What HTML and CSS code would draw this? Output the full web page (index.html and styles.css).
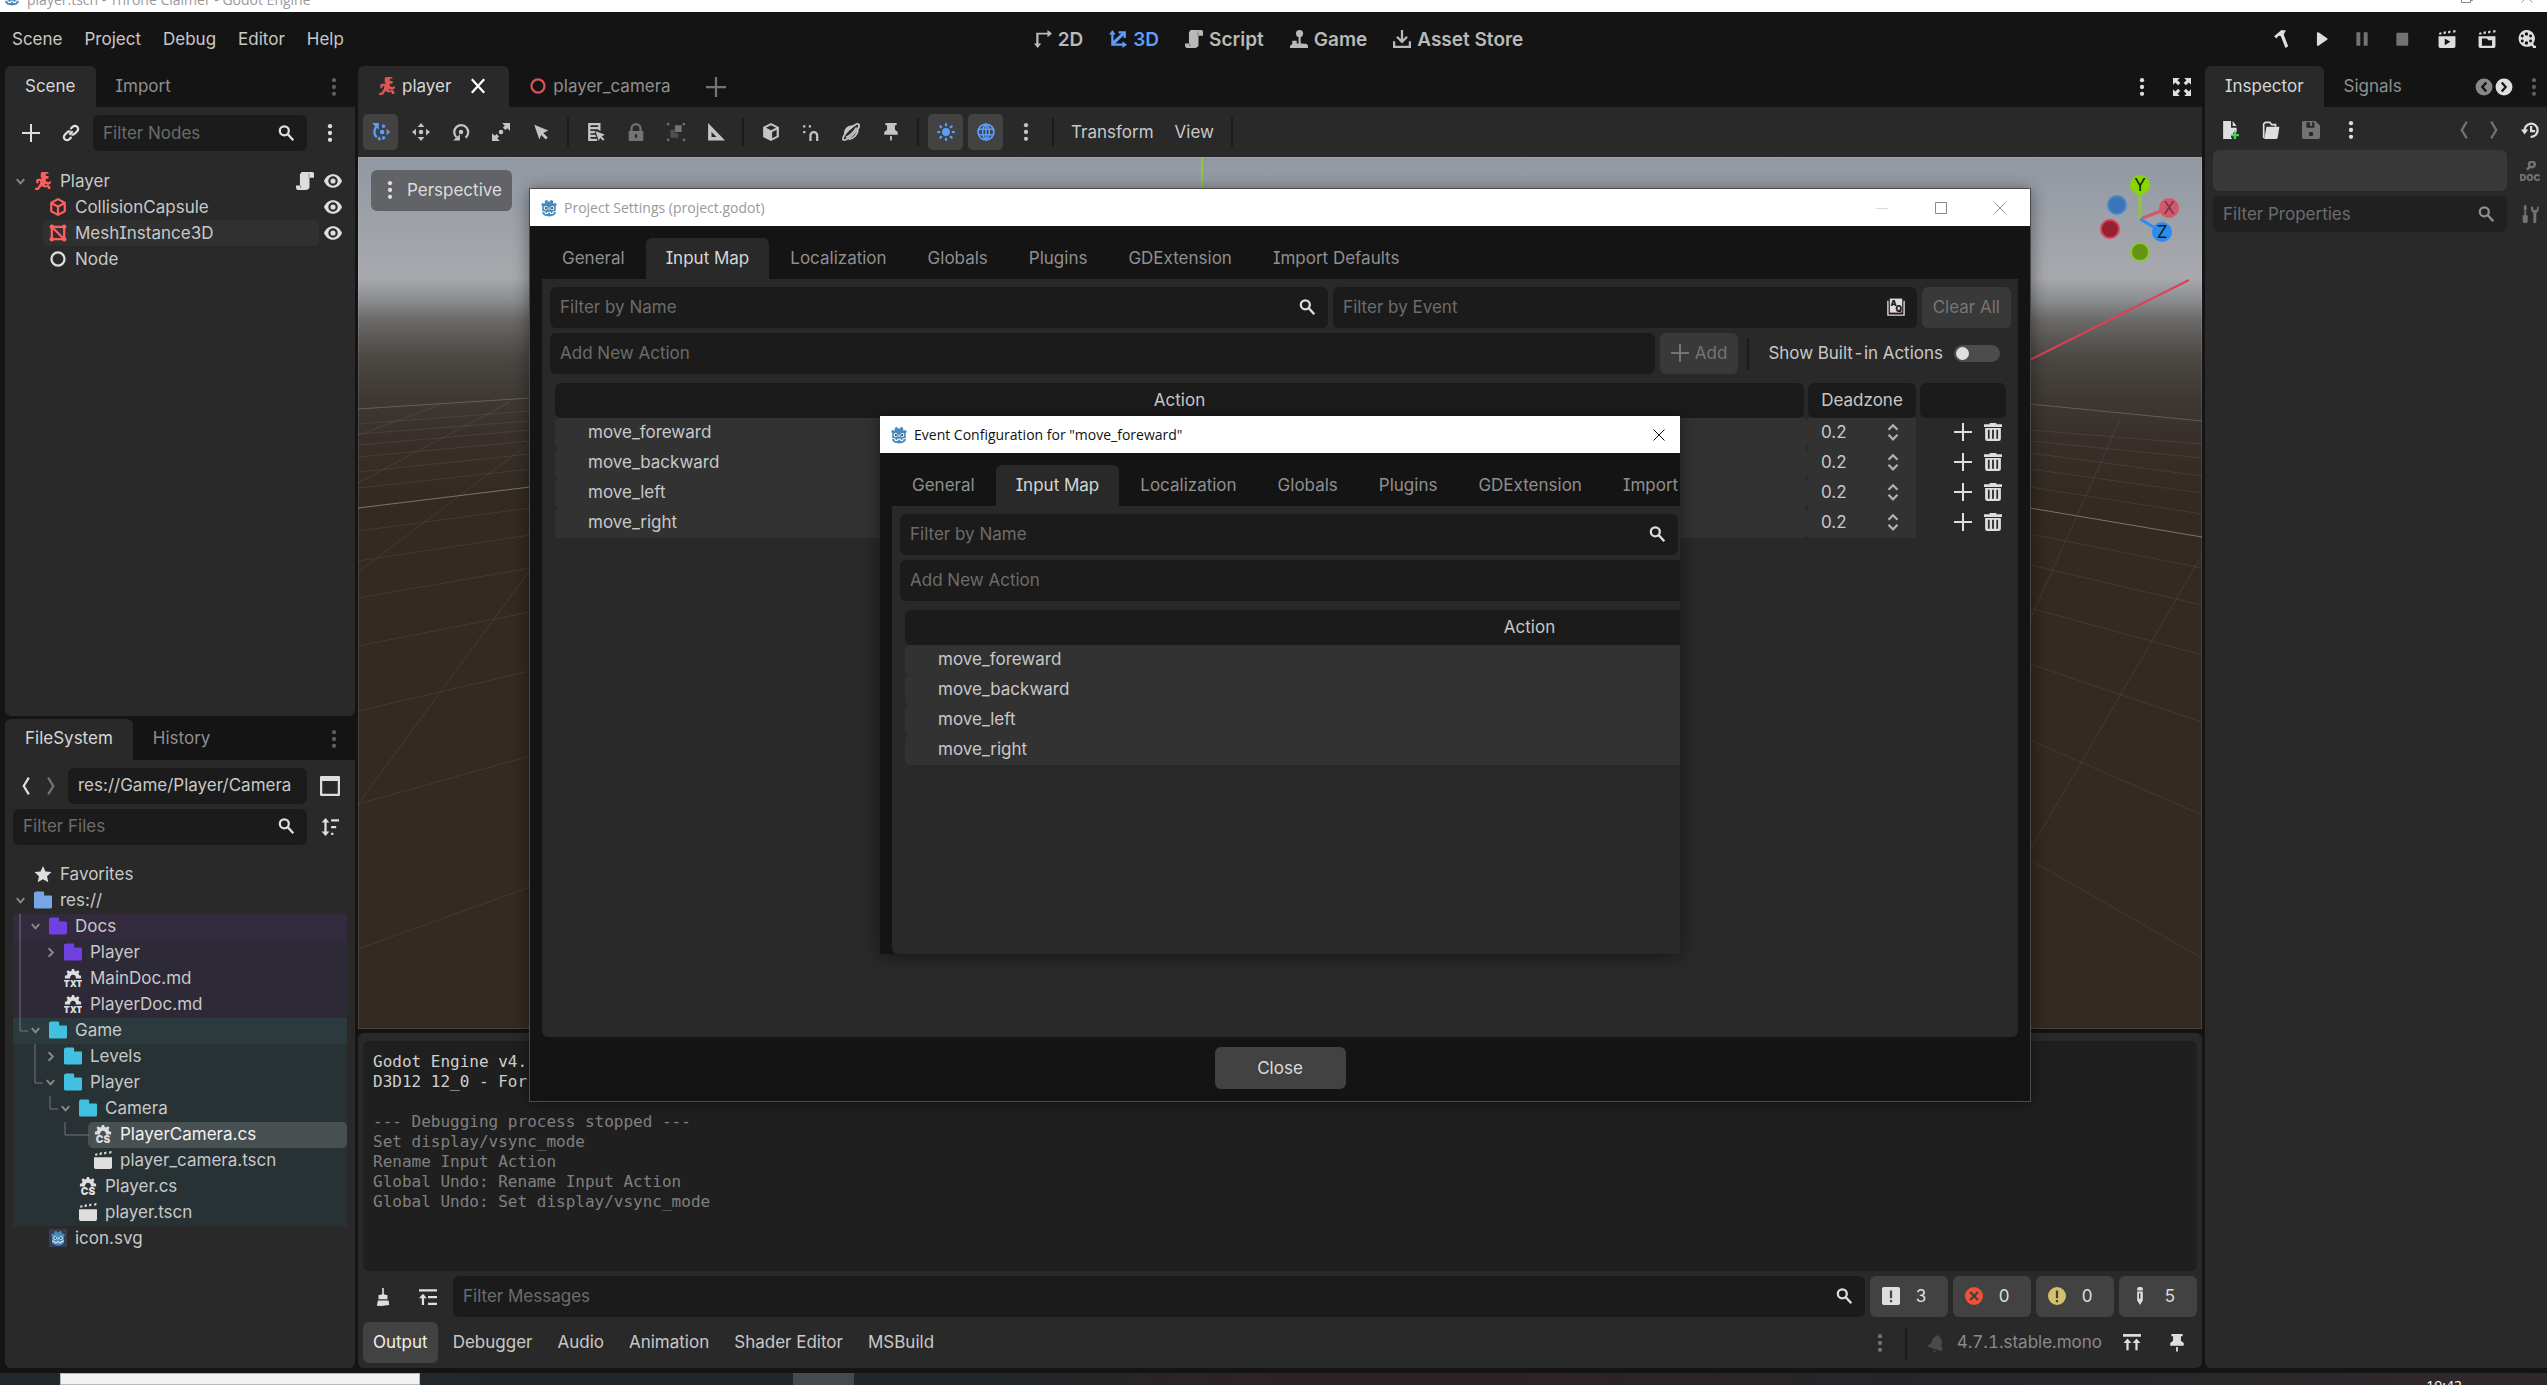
FILE: index.html
```html
<!DOCTYPE html>
<html lang="en">
<head>
    <meta charset="UTF-8">
    <meta name="viewport" content="width=device-width, initial-scale=1.0">
    <title>player.tscn - Throne Claimer - Godot Engine</title>
    <link rel="stylesheet" href="styles.css">
</head>
<body>
    <!-- icon sprite -->
    <svg class="sprite" aria-hidden="true">
        <symbol id="godot" viewBox="0 0 16 16"><path fill="#478cbf" d="M1 5.200l1.200-1.700 1.600.6.6-.4-.2-2L6.200.7l.9 1.500h1.800L9.800.7l2 1-.2 2 .6.4 1.600-.6L15 5.200l-1 1V12c0 2.200-3 3.500-6 3.500S2 14.200 2 12V6.200z"/><circle cx="5" cy="8" r="1.700" fill="#fff"/><circle cx="11" cy="8" r="1.700" fill="#fff"/><circle cx="5.200" cy="8.100" r="1" fill="#414042"/><circle cx="10.800" cy="8.100" r="1" fill="#414042"/><path stroke="#fff" stroke-width=".9" fill="none" d="M8 7.500v2M2 11l2.500.5.3 1.300h1.800l.3-1h2.200l.3 1h1.800l.3-1.300L14 11"/></symbol>
        <symbol id="add" viewBox="0 0 16 16"><path d="M7.100 0h1.800v7.100H16v1.800H8.900V16H7.100V8.900H0V7.100h7.100z"/></symbol>
        <symbol id="link" viewBox="0 0 16 16"><path class="line" d="M6.500 9.500l3-3M7.500 4.500l2-2a2.800 2.800 0 0 1 4 4l-2 2a2.800 2.800 0 0 1-3 .7M8.500 11.500l-2 2a2.800 2.800 0 0 1-4-4l2-2a2.800 2.800 0 0 1 3-.7"/></symbol>
        <symbol id="search" viewBox="0 0 16 16"><path class="line" d="M6.500 2a4 4 0 1 1 0 8 4 4 0 0 1 0-8zM9.500 9l5 5.500"/></symbol>
        <symbol id="dots" viewBox="0 0 16 16"><circle cx="8" cy="1.900" r="1.900"/><circle cx="8" cy="8" r="1.900"/><circle cx="8" cy="14.100" r="1.900"/></symbol>
        <symbol id="runner" viewBox="0 0 16 16"><path d="M7 0h4.500a1.500 1.500 0 0 1 1.500 1.500H10.500v2H13V5a1 1 0 0 1-1 1h-1.500v2l2 1L15 8v2l-2.500 1.500L10 10.500l-.7 1.200H13a1.500 1.500 0 0 1 1.500 1.500V15h-2.200v-1.500H8.500L6.800 12.500 4 16H1v-2h2l2.500-4V8H4v2H2V7.500A1.500 1.500 0 0 1 3.500 6H7V5H6V1z"/></symbol>
        <symbol id="script" viewBox="0 0 16 16"><path d="M5 0h9.500A1.500 1.500 0 0 1 16 1.500V5h-4v7.500a3 3 0 0 1-3 3.500H2.500A2.500 2.500 0 0 1 0 13.500V12h3.500V2z"/><path fill="#222" fill-opacity=".35" d="M11 1h1v4h-1zM3.500 12h1.200v2.500H3.500z"/></symbol>
        <symbol id="eye" viewBox="0 0 16 16"><path fill-rule="evenodd" d="M8 2C4.500 2 1.500 4.300 0 8c1.500 3.700 4.500 6 8 6s6.500-2.300 8-6c-1.500-3.700-4.500-6-8-6zm0 1.800a4.200 4.200 0 1 1 0 8.400 4.200 4.200 0 0 1 0-8.400z"/><circle cx="8" cy="8" r="2.300"/></symbol>
        <symbol id="shape" viewBox="0 0 16 16"><path class="line" stroke-linejoin="round" d="M8 1l6 3.200v7.600L8 15l-6-3.200V4.200zM2.300 4.500L8 7.800l5.700-3.300M8 7.800V15"/></symbol>
        <symbol id="mesh" viewBox="0 0 16 16"><path class="line" d="M2.500 2.500h11v11h-11zM2.500 2.500l11 11"/><circle cx="2.500" cy="2.500" r="2"/><circle cx="13.500" cy="2.500" r="2"/><circle cx="2.500" cy="13.500" r="2"/><circle cx="13.500" cy="13.500" r="2"/></symbol>
        <symbol id="node" viewBox="0 0 16 16"><circle class="line" cx="8" cy="8" r="5.800"/></symbol>
        <symbol id="close" viewBox="0 0 16 16"><path class="line" d="M2.500 2l11 12M13.500 2l-11 12"/></symbol>
        <symbol id="combo" viewBox="0 0 16 16"><circle cx="9" cy="8" r="2"/><path d="M0 0h6v6L4.300 4.300C2.600 6.800 2.900 10 5 12l-1.400 1.400C.7 10.600.4 6 2.800 2.800zM9 1l3 1-1 2.500L9 4zM9 15l3-1-1-2.500L9 12zM13 5l3 3-3 3zM4.800 13.500L7 12l1 3-2 .5z"/></symbol>
        <symbol id="move" viewBox="0 0 16 16"><circle cx="8" cy="8" r="2"/><path d="M8 0l3 3.500H5zM8 16l3-3.500H5zM0 8l3.500-3v6zM16 8l-3.500-3v6z"/></symbol>
        <symbol id="rotate" viewBox="0 0 16 16"><circle cx="8" cy="8" r="2"/><path class="line" d="M12 13A6.200 6.200 0 1 0 4 12.700"/><path d="M1 15.500h6V10z"/></symbol>
        <symbol id="scale" viewBox="0 0 16 16"><circle cx="8" cy="8" r="2"/><path d="M9 0h7v7l-2.400-2.400-1.700 1.700-2.200-2.200 1.700-1.700zM7 16H0V9l2.400 2.400 1.700-1.700 2.200 2.200-1.700 1.700z"/></symbol>
        <symbol id="cursor" viewBox="0 0 16 16"><path d="M2 1.500l12.500 5.200L10 8.800l4 4-1.800 1.800-4-4-1.700 4z"/></symbol>
        <symbol id="list" viewBox="0 0 16 16"><path fill-rule="evenodd" d="M1 0h11v7l-2-1V5.500H3V7h4v2H3v1.500h4.500l.7 2H3V14h6v2H1zm2 2v1.500h7V2z"/><path d="M7.500 7l8.500 3.500-3 1.300 2.500 2.700-1.200 1.200-2.600-2.600-1.200 2.900z"/></symbol>
        <symbol id="lock" viewBox="0 0 16 16"><path fill-rule="evenodd" d="M8 0a5 5 0 0 0-5 5v2H1.500v9h13V7H13V5a5 5 0 0 0-5-5zm0 2a3 3 0 0 1 3 3v2H5V5a3 3 0 0 1 3-3zM7 10h2v3H7z"/></symbol>
        <symbol id="group" viewBox="0 0 16 16"><path d="M0 0h2v2H0zM14 0h2v2h-2zM0 14h2v2H0zM14 14h2v2h-2zM7 2h6v6H7z"/><path opacity=".5" d="M3 6h4v3h3v4H3z"/></symbol>
        <symbol id="ruler" viewBox="0 0 16 16"><path fill-rule="evenodd" d="M1 0l15 15.500H1zm3 8v4.500h4.500z"/></symbol>
        <symbol id="box" viewBox="0 0 16 16"><path fill-rule="evenodd" d="M8 0l7 3.500v9L8 16l-7-3.500v-9zm0 2L3.500 4.200 8 6.500l4.500-2.300zM9 8v5.500l4-2V6z"/></symbol>
        <symbol id="snap" viewBox="0 0 16 16"><path class="line" d="M7.500 16v-5a3 3 0 0 1 6 0v5"/><path d="M1 2h2v2H1zM1 7h2v2H1zM6 2h2v2H6z"/></symbol>
        <symbol id="planet" viewBox="0 0 16 16"><path fill="none" stroke="currentColor" stroke-width="1.600" d="M14.800 1.200c1.200 1.200-.8 5-4.300 8.500s-8 6.300-9.300 5.200 1-5 4.500-8.600 7.900-6.300 9.100-5.100z"/><path d="M2 10.500C1 6.500 4 2.200 8.500 2.200L13 1z"/><path fill="none" stroke="currentColor" stroke-width="1.500" d="M6 14.500c4-.5 7.500-3.800 8.300-8M3.500 13c4-2 7-5 9.500-9"/></symbol>
        <symbol id="pin" viewBox="0 0 16 16"><path d="M3 0h10v2h-1.500v4L14 8v2.500H2V8l2.500-2V2H3zM7.200 11.500h1.600V15L8 16l-.8-1z"/></symbol>
        <symbol id="sun" viewBox="0 0 16 16"><circle cx="8" cy="8" r="3.500"/><path class="line" stroke-linecap="round" d="M8 1v1M8 14v1M1 8h1M14 8h1M3 3l.7.7M12.300 12.300l.7.7M3 13l.7-.7M12.300 3.700L13 3"/></symbol>
        <symbol id="globe" viewBox="0 0 16 16"><circle cx="8" cy="8" r="7" fill="none" stroke="currentColor" stroke-width="1.600"/><path fill="none" stroke="currentColor" stroke-width="1.400" d="M8 1v14M1.500 5.500h13M1.500 10.500h13M8 1C4 4 4 12 8 15M8 1c4 3 4 11 0 14"/></symbol>
        <symbol id="expand" viewBox="0 0 16 16"><path d="M0 0h6L4 2l2.500 2.500-2 2L2 4 0 6zM16 0h-6l2 2-2.500 2.500 2 2L14 4l2 2zM0 16h6l-2-2 2.500-2.500-2-2L2 12l-2-2zM16 16h-6l2-2-2.500-2.500 2-2L14 12l2-2z"/></symbol>
        <symbol id="v2d" viewBox="0 0 16 16"><path d="M12 0l4 3-4 3.500V4H4v8h2.500L3.200 16 0 12h2V2.500h10z"/></symbol>
        <symbol id="v3d" viewBox="0 0 16 16"><path d="M3 0l3 4H4v5.500L11 3H8.500V1H15v6h-2V4.800L5.500 12H12v-2l4 3-4 3v-2H2V4H0z"/></symbol>
        <symbol id="joystick" viewBox="0 0 16 16"><circle cx="8.500" cy="3.200" r="3.200"/><path d="M7.600 6h1.900v6H7.600zM2 9.500h4V12h5l4 .5 1 1.500v2H0v-2l2-1.500z"/></symbol>
        <symbol id="asset" viewBox="0 0 16 16"><path class="line" d="M8 0v10M3.500 6L8 10.500 12.500 6M1 10v5h14v-5"/></symbol>
        <symbol id="hammer" viewBox="0 0 16 16"><path d="M1 5.500L7.500 0l4 .5L9.500 4l4 10.500-2.500 1.500L7 5.500 5 5 3 7.500z"/></symbol>
        <symbol id="play" viewBox="0 0 16 16"><path d="M3.500 2.700c0-.8.8-1 1.400-.6L12.500 7.300c.6.400.6 1 0 1.400l-7.600 5.200c-.6.400-1.400.2-1.400-.6z"/></symbol>
        <symbol id="pause" viewBox="0 0 16 16"><path d="M3 2h3.500v12H3zM9.500 2H13v12H9.500z"/></symbol>
        <symbol id="stop" viewBox="0 0 16 16"><rect x="3" y="2.500" width="10.500" height="11.500" rx=".8"/></symbol>
        <symbol id="clapplay" viewBox="0 0 16 16"><path d="M1 2.500l2-.5v2H1zM5 1.600l2-.4v2l-2 .5zM9 1l2-.5v2L9 3zM13.500.4l2-.4v2l-2 .4z"/><path fill-rule="evenodd" d="M.5 5.500h15v9a1.500 1.500 0 0 1-1.500 1.500H2a1.500 1.500 0 0 1-1.500-1.500zM6 7.500v6l5-3z"/></symbol>
        <symbol id="clapfile" viewBox="0 0 16 16"><path d="M1 2.500l2-.5v2H1zM5 1.600l2-.4v2l-2 .5zM9 1l2-.5v2L9 3zM13.500.4l2-.4v2l-2 .4z"/><path fill-rule="evenodd" d="M.5 5.500h15v9a1.500 1.500 0 0 1-1.500 1.500H2a1.500 1.500 0 0 1-1.500-1.500zM3.500 7.500v6.500h9V9H9L8 7.500z"/></symbol>
        <symbol id="clap" viewBox="0 0 16 16"><path d="M1 2.500l2-.5v2H1zM5 1.600l2-.4v2l-2 .5zM9 1l2-.5v2L9 3zM13.500.4l2-.4v2l-2 .4zM0 5.500h16v9a1.500 1.500 0 0 1-1.500 1.500h-13A1.500 1.500 0 0 1 0 14.500z"/></symbol>
        <symbol id="reel" viewBox="0 0 16 16"><path fill-rule="evenodd" d="M7.500 0a7.500 7.500 0 0 1 6 12l1 2h1.500v2h-2.500l-1.300-2.300A7.500 7.500 0 1 1 7.500 0zm0 2a1.500 1.500 0 1 0 0 3 1.500 1.500 0 0 0 0-3zm0 8a1.500 1.500 0 1 0 0 3 1.500 1.500 0 0 0 0-3zM3.800 4a1.300 1.300 0 1 0 0 2.600 1.300 1.300 0 0 0 0-2.600zm7.400 0a1.300 1.300 0 1 0 0 2.600 1.300 1.300 0 0 0 0-2.600zM3.800 8.400a1.300 1.300 0 1 0 0 2.600 1.300 1.300 0 0 0 0-2.600zm7.400 0a1.300 1.300 0 1 0 0 2.600 1.300 1.300 0 0 0 0-2.600z"/></symbol>
        <symbol id="down" viewBox="0 0 16 16"><path class="line" d="M4 5.500l4 4.500 4-4.500"/></symbol>
        <symbol id="right" viewBox="0 0 16 16"><path class="line" d="M6 3.500L10.500 8 6 12.500"/></symbol>
        <symbol id="back" viewBox="0 0 16 16"><path class="line" d="M10.500 0.500L6 8l4.500 7.500"/></symbol>
        <symbol id="forward" viewBox="0 0 16 16"><path class="line" d="M5.500 0.500L10 8l-4.500 7.500"/></symbol>
        <symbol id="folder" viewBox="0 0 16 16"><path d="M1.500 0.500H8a1 1 0 0 1 1 1V4h6a1 1 0 0 1 1 1v9.500a1 1 0 0 1-1 1H1a1 1 0 0 1-1-1V1.500z"/></symbol>
        <symbol id="star" viewBox="0 0 16 16"><path d="M8 .8l2.200 5 5.400.5-4 3.700 1.100 5.400L8 12.600l-4.700 2.800L4.400 10l-4-3.700 5.400-.5z"/></symbol>
        <symbol id="txt" viewBox="0 0 16 16"><path d="M7 0h2l.4 1.800 1.300.5L12.300 1l1.500 1.500-1 1.600.6 1.400 1.800.5v2.500h-4.700a2.600 2.600 0 1 0-5 0H.8V6l1.800-.5.6-1.400-1-1.600L3.700 1l1.600 1.300 1.300-.5z"/><text x="8" y="16" text-anchor="middle" font-size="8" font-weight="900">TXT</text></symbol>
        <symbol id="cs" viewBox="0 0 16 16"><path d="M7 0h2l.4 1.800 1.300.5L12.300 1l1.500 1.500-1 1.600.6 1.400 1.800.5v2.500h-4.700a2.600 2.600 0 1 0-5 0H.8V6l1.800-.5.6-1.400-1-1.600L3.700 1l1.600 1.300 1.300-.5z"/><text x="8" y="16" text-anchor="middle" font-size="9" font-weight="900">CS</text></symbol>
        <symbol id="panel" viewBox="0 0 16 16"><path fill-rule="evenodd" d="M1 0h14a1 1 0 0 1 1 1v14a1 1 0 0 1-1 1H1a1 1 0 0 1-1-1V1a1 1 0 0 1 1-1zm.8 4v10.200h12.400V4z"/></symbol>
        <symbol id="sort" viewBox="0 0 16 16"><path d="M4 0l3.500 4H5v8h2.500L4 16 .5 12H3V4H.5zM9 1h7v2H9zM9 7h4.500v2H9zM9 13h2v2H9z"/></symbol>
        <symbol id="newfile" viewBox="0 0 16 16"><path d="M1 0h7v6h5v4h-3v2H8v3h1v1H1zM9.500 0L13 4.500H9.500z"/><path fill="#45d659" d="M10.500 9h2v2.500H15v2h-2.500V16h-2v-2.500H8v-2h2.500z"/></symbol>
        <symbol id="open" viewBox="0 0 16 16"><path d="M4 5h11.500L14 14.500a1.500 1.500 0 0 1-1.500 1.500H2z"/><path fill="none" stroke="currentColor" stroke-width="1.500" d="M1.500 15V2.500L3 1.200h4l1.500 2H12V5"/></symbol>
        <symbol id="save" viewBox="0 0 16 16"><path fill-rule="evenodd" d="M1.500 0H12l4 4v10.500a1.500 1.500 0 0 1-1.500 1.500h-13A1.500 1.500 0 0 1 0 14.500v-13A1.500 1.500 0 0 1 1.500 0zM4 1v5h7V1H9v3.500H7V1zm4 8.500a2 2 0 1 0 0 4 2 2 0 0 0 0-4z"/></symbol>
        <symbol id="history" viewBox="0 0 16 16"><path class="line" d="M3.500 10A5.800 5.800 0 1 1 8.500 14M9 4.500V9h3.500"/><path d="M0 7.500h6.500L3.200 12z"/></symbol>
        <symbol id="doc" viewBox="0 0 16 16"><circle class="line" cx="9.500" cy="2.700" r="2.300"/><path class="line" d="M8 4.500L5.500 7"/><text x="8" y="16" text-anchor="middle" font-size="7.500" font-weight="900">DOC</text></symbol>
        <symbol id="tools" viewBox="0 0 16 16"><path d="M3 0h1.500l.7 3-.7 1v5H6v5a2 2 0 0 1-4.500 0V9H3V4l-.7-1zM9 1v4l2 2v8a1.300 1.300 0 0 0 2.600 0V7l2-2V1L14 2v2.500h-3V2z"/></symbol>
        <symbol id="keys" viewBox="0 0 16 16"><path d="M2.500.5h11V13h-11z"/><path fill="none" stroke="currentColor" stroke-width="1.200" d="M.8 2.500v12.700h14.400V2.500"/><text x="3" y="7" font-size="7" font-weight="900" fill="#1b1b1b">A</text><text x="7.500" y="12.500" font-size="7.500" font-weight="900" fill="#1b1b1b">Q</text></symbol>
        <symbol id="updown" viewBox="0 0 16 16"><path class="line" d="M4 6l4-4 4 4M4 10.500l4 4 4-4"/></symbol>
        <symbol id="trash" viewBox="0 0 16 16"><path fill-rule="evenodd" d="M5 0h6v1h5v2.500H0V1h5zM1 4.500h14V14a2 2 0 0 1-2 2H3a2 2 0 0 1-2-2zm2.500 1.500v8H5V6zm3.700 0v8h1.600V6zm3.800 0v8h1.500V6z"/></symbol>
        <symbol id="brush" viewBox="0 0 16 16"><path d="M7.300 0h1.400v5.500L12 6.500V10H4V6.500l3.300-1zM3.500 11h9.500l.5 4-2 .3-5 .7-4-.3z"/></symbol>
        <symbol id="collapse" viewBox="0 0 16 16"><path d="M0 1h16v2H0zM8 7h8v2H8zM8 13h8v2H8zM3.500 5L7 9H4.500v6h-2V9H0z"/></symbol>
        <symbol id="msg" viewBox="0 0 16 16"><path fill-rule="evenodd" d="M1.500 0h13A1.500 1.500 0 0 1 16 1.500v13a1.500 1.500 0 0 1-1.500 1.500h-13A1.500 1.500 0 0 1 0 14.500v-13A1.500 1.500 0 0 1 1.500 0zM7 3v7h2V3zm0 8.500v2h2v-2z"/></symbol>
        <symbol id="error" viewBox="0 0 16 16"><circle cx="8" cy="8" r="8" fill="#ee5238"/><path stroke="#424242" stroke-width="2" d="M4.500 4.500l7 7M11.500 4.500l-7 7"/></symbol>
        <symbol id="warning" viewBox="0 0 16 16"><circle cx="8" cy="8" r="8" fill="#d6bf6d"/><path stroke="#424242" stroke-width="2" d="M8 3v7M8 11.500v2"/></symbol>
        <symbol id="pen" viewBox="0 0 16 16"><path fill-rule="evenodd" d="M5.500 1.500A1.500 1.500 0 0 1 7 0h2a1.500 1.500 0 0 1 1.500 1.500V3h-5zM5.500 4h5v8L8 16l-2.500-4zm1.600 1.500v5h1.200v-5z"/></symbol>
        <symbol id="bell" viewBox="0 0 16 16"><path d="M9 1.500L11 1l.5 1.500c2 1 3 3 2.500 5.500-.5 2-.5 4 1 5.500L13.500 15 1 11l.5-1c2-.5 3-2 4-4.500.8-2 1.800-3 3.500-3.500zM6 14l3 1-1 1c-1 0-2-1-2-2z"/></symbol>
        <symbol id="tops" viewBox="0 0 16 16"><path d="M0 0h16v2.500H0zM4 4l3.500 4H5v6.500H3V8H.5zM12 4l3.500 4H13v6.500h-2V8H8.500z"/></symbol>
        <symbol id="prevtab" viewBox="0 0 16 16"><circle cx="8" cy="8" r="7.500"/><path stroke="#141414" stroke-width="2" fill="none" d="M10 4L6.500 8l3.500 4"/></symbol>
        <symbol id="nexttab" viewBox="0 0 16 16"><circle cx="8" cy="8" r="7.500"/><path stroke="#141414" stroke-width="2" fill="none" d="M6 4l3.500 4L6 12"/></symbol>
        <symbol id="wclose" viewBox="0 0 12 12"><path fill="none" stroke="currentColor" d="M.5.5l11 11M11.500.5l-11 11"/></symbol>
        <symbol id="wmax" viewBox="0 0 12 12"><path fill="none" stroke="currentColor" d="M.5.500h11v11H.500z"/></symbol>
        <symbol id="wmin" viewBox="0 0 12 12"><path fill="none" stroke="currentColor" d="M0 6.500h12"/></symbol>
    </svg>

    <div class="app-title">
        <svg class="icon"><use href="#godot"/></svg>
        <span>player.tscn - Throne Claimer - Godot Engine</span>
        <svg class="app-restore" viewBox="0 0 12 12"><path fill="none" stroke="#888" d="M.5 2.500h9v9h-9zM2.500 2.500v-2h9v9h-2"/></svg>
        <svg class="app-close"><use href="#wclose"/></svg>
    </div>

    <header class="menubar">
        <nav class="menus">
            <button>Scene</button>
            <button>Project</button>
            <button>Debug</button>
            <button>Editor</button>
            <button>Help</button>
        </nav>
        <nav class="screens">
            <button><svg class="icon"><use href="#v2d"/></svg>2D</button>
            <button class="active"><svg class="icon"><use href="#v3d"/></svg>3D</button>
            <button><svg class="icon"><use href="#script"/></svg>Script</button>
            <button><svg class="icon"><use href="#joystick"/></svg>Game</button>
            <button><svg class="icon"><use href="#asset"/></svg>Asset Store</button>
        </nav>
        <div class="run-bar">
            <button class="tool" aria-label="Build"><svg class="icon"><use href="#hammer"/></svg></button>
            <button class="tool" aria-label="Run"><svg class="icon"><use href="#play"/></svg></button>
            <button class="tool dim" aria-label="Pause"><svg class="icon"><use href="#pause"/></svg></button>
            <button class="tool dim" aria-label="Stop"><svg class="icon"><use href="#stop"/></svg></button>
            <button class="tool scene-run" aria-label="Run scene"><svg class="icon"><use href="#clapplay"/></svg></button>
            <button class="tool" aria-label="Run specific scene"><svg class="icon"><use href="#clapfile"/></svg></button>
            <button class="tool" aria-label="Movie maker"><svg class="icon"><use href="#reel"/></svg></button>
        </div>
    </header>

    <main class="workspace">
        <div class="left-column">
            <section class="dock">
                <div class="tabs">
                    <button class="tab active">Scene</button>
                    <button class="tab">Import</button>
                    <button class="tool dock-menu" aria-label="Dock menu"><svg class="icon"><use href="#dots"/></svg></button>
                </div>
                <div class="dock-body">
                    <div class="toolbar">
                        <button class="tool" aria-label="Add node"><svg class="icon"><use href="#add"/></svg></button>
                        <button class="tool" aria-label="Instantiate scene"><svg class="icon"><use href="#link"/></svg></button>
                        <label class="field"><input type="text" placeholder="Filter Nodes" aria-label="Filter Nodes"><svg class="icon"><use href="#search"/></svg></label>
                        <button class="tool" aria-label="More"><svg class="icon"><use href="#dots"/></svg></button>
                    </div>
                    <ul class="tree">
                        <li class="row"><svg class="chevron"><use href="#down"/></svg><span class="item"><svg class="icon red"><use href="#runner"/></svg>Player</span><span class="side"><svg class="icon"><use href="#script"/></svg></span><span class="side"><svg class="icon"><use href="#eye"/></svg></span></li>
                        <li class="row level-1"><span class="chevron"></span><span class="item"><svg class="icon red"><use href="#shape"/></svg>CollisionCapsule</span><span class="side"><svg class="icon"><use href="#eye"/></svg></span></li>
                        <li class="row level-1"><span class="chevron"></span><span class="item hovered"><svg class="icon red"><use href="#mesh"/></svg>MeshInstance3D</span><span class="side"><svg class="icon"><use href="#eye"/></svg></span></li>
                        <li class="row level-1"><span class="chevron"></span><span class="item"><svg class="icon"><use href="#node"/></svg>Node</span></li>
                    </ul>
                </div>
            </section>

            <section class="dock">
                <div class="tabs">
                    <button class="tab active">FileSystem</button>
                    <button class="tab">History</button>
                    <button class="tool dock-menu" aria-label="Dock menu"><svg class="icon"><use href="#dots"/></svg></button>
                </div>
                <div class="dock-body">
                    <div class="toolbar">
                        <div class="history-nav">
                            <button class="tool" aria-label="Back"><svg class="icon"><use href="#back"/></svg></button>
                            <button class="tool dim" aria-label="Forward"><svg class="icon"><use href="#forward"/></svg></button>
                        </div>
                        <label class="field"><input type="text" value="res://Game/Player/Camera" aria-label="Path"></label>
                        <button class="tool" aria-label="Split mode"><svg class="icon large"><use href="#panel"/></svg></button>
                    </div>
                    <div class="toolbar">
                        <label class="field"><input type="text" placeholder="Filter Files" aria-label="Filter Files"><svg class="icon"><use href="#search"/></svg></label>
                        <button class="tool" aria-label="Sort"><svg class="icon"><use href="#sort"/></svg></button>
                    </div>
                    <ul class="tree">
                        <li class="row"><span class="chevron"></span><span class="item"><svg class="icon"><use href="#star"/></svg>Favorites</span></li>
                        <li class="row"><svg class="chevron"><use href="#down"/></svg><span class="item"><svg class="icon folder-blue"><use href="#folder"/></svg>res://</span></li>
                        <li class="row level-1 purple-head"><svg class="chevron"><use href="#down"/></svg><span class="item"><svg class="icon folder-purple"><use href="#folder"/></svg>Docs</span></li>
                        <li class="row level-2 purple"><svg class="chevron"><use href="#right"/></svg><span class="item"><svg class="icon folder-purple"><use href="#folder"/></svg>Player</span></li>
                        <li class="row level-2 purple"><span class="chevron"></span><span class="item"><svg class="icon"><use href="#txt"/></svg>MainDoc.md</span></li>
                        <li class="row level-2 purple"><span class="chevron"></span><span class="item"><svg class="icon"><use href="#txt"/></svg>PlayerDoc.md</span></li>
                        <li class="row level-1 teal-head"><svg class="chevron"><use href="#down"/></svg><span class="item"><svg class="icon folder-teal"><use href="#folder"/></svg>Game</span></li>
                        <li class="row level-2 teal"><svg class="chevron"><use href="#right"/></svg><span class="item"><svg class="icon folder-teal"><use href="#folder"/></svg>Levels</span></li>
                        <li class="row level-2 teal"><svg class="chevron"><use href="#down"/></svg><span class="item"><svg class="icon folder-teal"><use href="#folder"/></svg>Player</span></li>
                        <li class="row level-3 teal"><svg class="chevron"><use href="#down"/></svg><span class="item"><svg class="icon folder-teal"><use href="#folder"/></svg>Camera</span></li>
                        <li class="row level-4 teal"><span class="chevron"></span><span class="item selected"><svg class="icon"><use href="#cs"/></svg>PlayerCamera.cs</span></li>
                        <li class="row level-4 teal"><span class="chevron"></span><span class="item"><svg class="icon"><use href="#clap"/></svg>player_camera.tscn</span></li>
                        <li class="row level-3 teal"><span class="chevron"></span><span class="item"><svg class="icon"><use href="#cs"/></svg>Player.cs</span></li>
                        <li class="row level-3 teal"><span class="chevron"></span><span class="item"><svg class="icon"><use href="#clap"/></svg>player.tscn</span></li>
                        <li class="row level-1"><span class="chevron"></span><span class="item"><svg class="icon svg-file"><use href="#godot"/></svg>icon.svg</span></li>
                        <li class="guides"><svg width="90" height="390"><path d="M7 52v117h8M22 182v39h8M37 234v13h8M52 260v13h24"/></svg></li>
                    </ul>
                </div>
            </section>
        </div>

        <div class="center-column">
            <div class="tabs">
                <button class="tab scene-tab active"><svg class="icon red"><use href="#runner"/></svg>player<svg class="icon tab-close"><use href="#close"/></svg></button>
                <button class="tab scene-tab"><svg class="icon red"><use href="#node"/></svg>player_camera</button>
                <button class="tool dim new-tab" aria-label="Add scene"><svg class="icon large"><use href="#add"/></svg></button>
                <div class="tabs-end">
                    <button class="tool" aria-label="Scene tabs"><svg class="icon"><use href="#dots"/></svg></button>
                    <button class="tool" aria-label="Distraction free mode"><svg class="icon"><use href="#expand"/></svg></button>
                </div>
            </div>
            <div class="toolbar view-toolbar">
                <button class="tool pressed" aria-label="Transform mode"><svg class="icon"><use href="#combo"/></svg></button>
                <button class="tool" aria-label="Move"><svg class="icon"><use href="#move"/></svg></button>
                <button class="tool" aria-label="Rotate"><svg class="icon"><use href="#rotate"/></svg></button>
                <button class="tool" aria-label="Scale"><svg class="icon"><use href="#scale"/></svg></button>
                <button class="tool" aria-label="Select"><svg class="icon"><use href="#cursor"/></svg></button>
                <span class="separator"></span>
                <button class="tool" aria-label="Selectable nodes"><svg class="icon"><use href="#list"/></svg></button>
                <button class="tool dim" aria-label="Lock"><svg class="icon"><use href="#lock"/></svg></button>
                <button class="tool dim" aria-label="Group"><svg class="icon"><use href="#group"/></svg></button>
                <button class="tool" aria-label="Ruler"><svg class="icon"><use href="#ruler"/></svg></button>
                <span class="separator"></span>
                <button class="tool" aria-label="Local space"><svg class="icon"><use href="#box"/></svg></button>
                <button class="tool" aria-label="Snap"><svg class="icon"><use href="#snap"/></svg></button>
                <button class="tool" aria-label="Trackball"><svg class="icon"><use href="#planet"/></svg></button>
                <button class="tool" aria-label="Preserve children"><svg class="icon"><use href="#pin"/></svg></button>
                <span class="separator"></span>
                <button class="tool pressed" aria-label="Preview sun"><svg class="icon"><use href="#sun"/></svg></button>
                <button class="tool pressed" aria-label="Preview environment"><svg class="icon"><use href="#globe"/></svg></button>
                <button class="tool" aria-label="More"><svg class="icon"><use href="#dots"/></svg></button>
                <span class="separator"></span>
                <button class="text-tool">Transform</button>
                <button class="text-tool">View</button>
                <span class="separator"></span>
            </div>

            <div class="viewport">
                <svg class="scene-view" viewBox="358 157 1844 872" preserveAspectRatio="xMinYMin slice">
                    <g class="grid">
                        <path d="M358 424L530 411M358 434L530 421M358 445L530 430M358 457L530 441M358 472L530 454M358 488L530 469M358 531L530 508M358 561L530 535M358 598L530 568M358 646L530 612M358 711L530 671M358 804L530 756M358 949L530 887"/>
                        <path d="M358 483L510 402M358 572L530 443M358 804L530 570M358 435L440 405"/>
                        <path d="M2030 430L2202 444M2030 441L2202 458M2030 453L2202 476M2030 469L2202 493M2030 487L2202 514M2030 534L2202 568M2030 565L2202 605M2030 608L2202 655M2030 664L2202 722M2030 740L2202 815M2030 860L2202 958"/>
                        <path d="M2120 420L2030 620M2202 555L2030 850"/>
                        <path class="major" d="M358 409L530 398M2030 404L2202 421"/>
                        <path class="bright" d="M358 508L530 487M2030 508L2202 537"/>
                    </g>
                    <path stroke="#8cc83c" stroke-width="2" d="M1202 157v40"/>
                    <path stroke="#dc4159" stroke-width="2" d="M2020 365L2189 280"/>
                    <g stroke-width="3" fill="none">
                        <path stroke="#d4576c" d="M2140 219l29-11"/>
                        <path stroke="#8cc83c" d="M2140 219v-34"/>
                        <path stroke="#2e8cf0" d="M2140 219l22 13"/>
                    </g>
                    <circle cx="2117" cy="205" r="9" fill="#3c74b8" stroke="#4a88cc" stroke-width="2"/>
                    <circle cx="2110" cy="229" r="9" fill="#96202f" stroke="#dc4159" stroke-width="2"/>
                    <circle cx="2140" cy="252" r="9" fill="#649614" stroke="#8cc83c" stroke-width="2"/>
                    <circle cx="2140" cy="185" r="10" fill="#87d600"/>
                    <circle cx="2169" cy="208" r="10" fill="#d4576c"/>
                    <circle cx="2162" cy="232" r="10" fill="#2e8cf0"/>
                    <g class="axis-names"><text x="2140" y="191">Y</text><text class="axis-back" x="2169" y="214">X</text><text x="2162" y="238">Z</text></g>
                </svg>
                <button class="view-name"><svg class="icon"><use href="#dots"/></svg>Perspective</button>
            </div>

            <section class="output">
                <div class="log">
                    <p class="plain">Godot Engine v4.</p>
                    <p class="plain">D3D12 12_0 - For</p>
                    <p>&nbsp;</p>
                    <p>--- Debugging process stopped ---</p>
                    <p>Set display/vsync_mode</p>
                    <p>Rename Input Action</p>
                    <p>Global Undo: Rename Input Action</p>
                    <p>Global Undo: Set display/vsync_mode</p>
                </div>
                <div class="output-row">
                    <button class="tool wide" aria-label="Clear output"><svg class="icon"><use href="#brush"/></svg></button>
                    <button class="tool wide" aria-label="Collapse duplicates"><svg class="icon"><use href="#collapse"/></svg></button>
                    <label class="field tall"><input type="text" placeholder="Filter Messages" aria-label="Filter Messages"><svg class="icon"><use href="#search"/></svg></label>
                    <button class="counter"><svg class="icon"><use href="#msg"/></svg>3</button>
                    <button class="counter"><svg class="icon"><use href="#error"/></svg>0</button>
                    <button class="counter"><svg class="icon"><use href="#warning"/></svg>0</button>
                    <button class="counter"><svg class="icon"><use href="#pen"/></svg>5</button>
                </div>
                <div class="output-row">
                    <button class="bottom-tab active">Output</button>
                    <button class="bottom-tab">Debugger</button>
                    <button class="bottom-tab">Audio</button>
                    <button class="bottom-tab">Animation</button>
                    <button class="bottom-tab">Shader Editor</button>
                    <button class="bottom-tab">MSBuild</button>
                    <div class="status">
                        <button class="tool dim" aria-label="Panel menu"><svg class="icon"><use href="#dots"/></svg></button>
                        <span class="separator"></span>
                        <svg class="icon bell"><use href="#bell"/></svg>
                        <button class="version">4.7.1.stable.mono</button>
                        <button class="tool wide" aria-label="Expand panel"><svg class="icon"><use href="#tops"/></svg></button>
                        <button class="tool wide" aria-label="Pin panel"><svg class="icon"><use href="#pin"/></svg></button>
                    </div>
                </div>
            </section>
        </div>

        <section class="dock inspector">
            <div class="tabs">
                <button class="tab active">Inspector</button>
                <button class="tab">Signals</button>
                <div class="tab-arrows">
                    <svg class="icon prev"><use href="#prevtab"/></svg>
                    <svg class="icon"><use href="#nexttab"/></svg>
                    <svg class="icon tab-dots"><use href="#dots"/></svg>
                </div>
            </div>
            <div class="dock-body inspector-grid">
                <div class="resource-bar">
                    <button class="tool" aria-label="New resource"><svg class="icon"><use href="#newfile"/></svg></button>
                    <button class="tool" aria-label="Load resource"><svg class="icon"><use href="#open"/></svg></button>
                    <button class="tool dim" aria-label="Save resource"><svg class="icon"><use href="#save"/></svg></button>
                    <button class="tool" aria-label="More"><svg class="icon"><use href="#dots"/></svg></button>
                    <div class="resource-nav">
                        <svg class="icon dim"><use href="#back"/></svg>
                        <svg class="icon dim"><use href="#forward"/></svg>
                    </div>
                </div>
                <button class="tool" aria-label="History"><svg class="icon"><use href="#history"/></svg></button>
                <button class="object-picker" aria-label="Edited object"></button>
                <button class="tool dim" aria-label="Open documentation"><svg class="icon large"><use href="#doc"/></svg></button>
                <label class="field faded"><input type="text" placeholder="Filter Properties" aria-label="Filter Properties"><svg class="icon"><use href="#search"/></svg></label>
                <button class="tool dim" aria-label="Manage properties"><svg class="icon"><use href="#tools"/></svg></button>
            </div>
        </section>
    </main>

    <footer class="taskbar">
        <div class="task-search"></div>
        <div class="task-active"></div>
        <span class="clock">19:42</span>
    </footer>

    <!-- Project Settings window -->
    <section class="window settings-window">
        <div class="window-title inactive">
            <svg class="icon"><use href="#godot"/></svg>
            <span>Project Settings (project.godot)</span>
            <div class="window-buttons">
                <svg class="faint"><use href="#wmin"/></svg>
                <svg><use href="#wmax"/></svg>
                <svg><use href="#wclose"/></svg>
            </div>
        </div>
        <div class="window-body">
            <div class="tabs">
                <button class="tab">General</button>
                <button class="tab active">Input Map</button>
                <button class="tab">Localization</button>
                <button class="tab">Globals</button>
                <button class="tab">Plugins</button>
                <button class="tab">GDExtension</button>
                <button class="tab">Import Defaults</button>
            </div>
            <div class="panel">
                <div class="filter-row">
                    <label class="field tall"><input type="text" placeholder="Filter by Name" aria-label="Filter by Name"><svg class="icon"><use href="#search"/></svg></label>
                    <label class="field tall"><input type="text" placeholder="Filter by Event" aria-label="Filter by Event"><svg class="icon"><use href="#keys"/></svg></label>
                    <button class="push" disabled>Clear All</button>
                </div>
                <div class="add-row">
                    <label class="field tall"><input type="text" placeholder="Add New Action" aria-label="Add New Action"></label>
                    <button class="push add-button" disabled><svg class="icon"><use href="#add"/></svg>Add</button>
                    <span class="separator"></span>
                    <label class="builtin" for="builtin">Show Built-in Actions</label>
                    <input class="toggle" type="checkbox" id="builtin">
                </div>
                <table class="actions">
                    <thead>
                        <tr><th><span>Action</span></th><th class="deadzone"><span>Deadzone</span></th><th class="ops"><span></span></th></tr>
                    </thead>
                    <tbody>
                        <tr><td class="name">move_foreward</td><td class="value"><div><input type="text" value="0.2" aria-label="Deadzone"><svg class="icon"><use href="#updown"/></svg></div></td><td class="edit"><div><button class="tool" aria-label="Add event"><svg class="icon"><use href="#add"/></svg></button><button class="tool" aria-label="Remove action"><svg class="icon"><use href="#trash"/></svg></button></div></td></tr>
                        <tr><td class="name">move_backward</td><td class="value"><div><input type="text" value="0.2" aria-label="Deadzone"><svg class="icon"><use href="#updown"/></svg></div></td><td class="edit"><div><button class="tool" aria-label="Add event"><svg class="icon"><use href="#add"/></svg></button><button class="tool" aria-label="Remove action"><svg class="icon"><use href="#trash"/></svg></button></div></td></tr>
                        <tr><td class="name">move_left</td><td class="value"><div><input type="text" value="0.2" aria-label="Deadzone"><svg class="icon"><use href="#updown"/></svg></div></td><td class="edit"><div><button class="tool" aria-label="Add event"><svg class="icon"><use href="#add"/></svg></button><button class="tool" aria-label="Remove action"><svg class="icon"><use href="#trash"/></svg></button></div></td></tr>
                        <tr><td class="name">move_right</td><td class="value"><div><input type="text" value="0.2" aria-label="Deadzone"><svg class="icon"><use href="#updown"/></svg></div></td><td class="edit"><div><button class="tool" aria-label="Add event"><svg class="icon"><use href="#add"/></svg></button><button class="tool" aria-label="Remove action"><svg class="icon"><use href="#trash"/></svg></button></div></td></tr>
                    </tbody>
                </table>
            </div>
            <div class="window-footer"><button class="push">Close</button></div>
        </div>
    </section>

    <!-- Event Configuration window, its content is wider than the frame -->
    <section class="window event-window">
        <div class="window-title">
            <svg class="icon"><use href="#godot"/></svg>
            <span>Event Configuration for "move_foreward"</span>
            <div class="window-buttons"><svg><use href="#wclose"/></svg></div>
        </div>
        <div class="window-body">
            <div class="tabs">
                <button class="tab">General</button>
                <button class="tab active">Input Map</button>
                <button class="tab">Localization</button>
                <button class="tab">Globals</button>
                <button class="tab">Plugins</button>
                <button class="tab">GDExtension</button>
                <button class="tab">Import</button>
            </div>
            <div class="panel">
                <label class="field tall name-filter"><input type="text" placeholder="Filter by Name" aria-label="Filter by Name"><svg class="icon"><use href="#search"/></svg></label>
                <label class="field tall"><input type="text" placeholder="Add New Action" aria-label="Add New Action"></label>
                <table class="actions">
                    <thead>
                        <tr><th><span>Action</span></th></tr>
                    </thead>
                    <tbody>
                        <tr><td class="name">move_foreward</td></tr>
                        <tr><td class="name">move_backward</td></tr>
                        <tr><td class="name">move_left</td></tr>
                        <tr><td class="name">move_right</td></tr>
                    </tbody>
                </table>
            </div>
        </div>
    </section>
</body>
</html>
```
FILE: styles.css
```css
* {
    margin: 0;
    padding: 0;
    box-sizing: border-box;
}

body {
    position: relative;
    display: flex;
    flex-direction: column;
    height: 100vh;
    overflow: hidden;
    background: #141414;
    color: #c8c8c8;
    font-family: Inter, "Liberation Sans", sans-serif;
    font-feature-settings: "cv08";
    font-size: 17px;
}

button,
input {
    font: inherit;
    font-feature-settings: inherit;
    color: inherit;
    background: none;
    border: none;
    outline: none;
}

button {
    display: flex;
    align-items: center;
    justify-content: center;
    white-space: nowrap;
}

.sprite {
    display: none;
}

.icon {
    width: 18px;
    height: 18px;
    flex: none;
    fill: currentColor;
    color: #dedede;
}

.icon.large {
    width: 20px;
    height: 20px;
}

.line {
    fill: none;
    stroke: currentColor;
    stroke-width: 2;
}

.icon.red {
    color: #fc5f5f;
}

.icon.dim,
.dim .icon {
    color: #737373;
}

.icon.folder-blue {
    color: #78a6e4;
}

.icon.folder-purple {
    color: #7040e0;
}

.icon.folder-teal {
    color: #42c0e2;
}

.icon.svg-file {
    background: #363d52;
    padding: 1px;
}

/* main window title */
.app-title {
    display: flex;
    align-items: flex-end;
    gap: 6px;
    flex: none;
    height: 12px;
    padding: 0 6px 0 3px;
    overflow: hidden;
    background: #fff;
    color: #999;
    font-family: "Open Sans", "Liberation Sans", sans-serif;
    font-size: 14px;
    line-height: 20px;
}

.app-title span {
    flex: 1;
    margin-bottom: 2px;
}

.app-title .icon {
    margin-bottom: 6px;
}

.app-restore,
.app-close {
    width: 12px;
    height: 12px;
    margin-bottom: 9px;
}

.app-restore {
    margin-right: 42px;
}

.app-close {
    margin-right: 8px;
}

/* menu bar */
.menubar {
    display: grid;
    grid-template-columns: 1fr auto 1fr;
    align-items: center;
    flex: none;
    height: 54px;
    padding-left: 10px;
}

.menus {
    display: flex;
    gap: 22px;
    padding: 0 0 1px 2px;
}

.screens {
    display: flex;
    gap: 26px;
    font-size: 19px;
    font-weight: 600;
    color: #b9b9b9;
}

.screens button {
    gap: 6px;
}

.screens .icon {
    color: inherit;
}

.screens .active {
    color: #5c9dfa;
}

.run-bar {
    display: flex;
    justify-content: flex-end;
    gap: 5px;
    padding-right: 3px;
}

.scene-run {
    margin-left: 5px;
}

.tool {
    flex: none;
    width: 35px;
    height: 36px;
    border-radius: 5px;
}

.tool.wide {
    width: 40px;
}

.pressed {
    background: #424242;
}

.pressed .icon {
    color: #5c9dfa;
}

/* docks */
.workspace {
    display: flex;
    gap: 3px;
    flex: 1;
    min-height: 0;
    padding: 0 0 5px 5px;
}

.left-column {
    display: flex;
    flex-direction: column;
    gap: 3px;
    width: 350px;
}

.dock {
    display: flex;
    flex-direction: column;
    flex: 1;
}

.tabs {
    display: flex;
    align-items: center;
    flex: none;
    height: 41px;
}

.tab {
    height: 41px;
    padding: 0 20px 2px;
    border-radius: 6px 6px 0 0;
    color: #8f8f8f;
}

.tab.active {
    background: #292929;
    color: #d6d6d6;
}

.dock-menu {
    margin-left: auto;
    margin-right: 4px;
}

.dock-menu .icon {
    color: #5e5e5e;
}

.dock-body {
    flex: 1;
    padding: 8px;
    background: #292929;
    border-radius: 0 0 6px 6px;
}

.toolbar {
    display: flex;
    align-items: center;
    gap: 5px;
    margin-bottom: 5px;
}

.history-nav {
    display: flex;
}

.history-nav .tool {
    width: 25px;
}

.field {
    display: flex;
    align-items: center;
    flex: 1;
    min-width: 0;
    height: 36px;
    padding: 0 12px 1px 10px;
    background: #1b1b1b;
    border-radius: 6px;
}

.field.tall {
    height: 41px;
}

.field input {
    flex: 1;
    width: 100%;
    min-width: 0;
}

.field input::placeholder {
    color: #6c6c6c;
    opacity: 1;
}

.field.faded {
    background: #202020;
}

.field.faded .icon {
    color: #8f8f8f;
}

.tree {
    position: relative;
    margin-top: 17px;
    list-style: none;
}

.row {
    display: flex;
    align-items: center;
    height: 26px;
}

.level-1 {
    padding-left: 15px;
}

.level-2 {
    padding-left: 30px;
}

.level-3 {
    padding-left: 45px;
}

.level-4 {
    padding-left: 60px;
}

.chevron {
    flex: none;
    width: 15px;
    height: 15px;
    color: #8a8a8a;
}

.item {
    display: flex;
    align-items: center;
    gap: 8px;
    flex: 1;
    height: 26px;
    padding: 0 0 1px 6px;
    border-radius: 5px;
}

.item.hovered {
    background: #303030;
}

.item.selected {
    background: #485052;
    color: #f2f2f2;
}

.side {
    display: flex;
    justify-content: center;
    width: 28px;
}

.purple-head {
    background: #342a3e;
}

.purple {
    background: #2e2936;
}

.teal-head {
    background: #2b3b3d;
}

.teal {
    background: #283235;
}

.guides {
    position: absolute;
    left: 0;
    top: 0;
    fill: none;
    stroke: #74747a;
}

/* 3D view */
.center-column {
    display: flex;
    flex-direction: column;
    flex: 1;
    min-width: 0;
}

.scene-tab {
    gap: 6px;
}

.scene-tab.active {
    padding-right: 22px;
}

.scene-tab .red {
    opacity: 0.85;
}

.tab-close {
    margin-left: 12px;
    color: #fff;
}

.new-tab {
    margin-left: 8px;
}

.tabs-end {
    display: flex;
    gap: 5px;
    margin-left: auto;
    padding-right: 3px;
}

.view-toolbar {
    flex: none;
    height: 50px;
    margin: 0;
    padding: 0 5px;
    background: #292929;
}

.view-toolbar .tool:not(.dim):not(.pressed) .icon {
    color: #c4c4c4;
}

.separator {
    flex: none;
    width: 2px;
    height: 28px;
    margin: 0 4px;
    background: #1a1a1a;
}

.text-tool {
    height: 36px;
    padding: 0 8px;
}

.viewport {
    position: relative;
    flex: 1;
    min-height: 0;
    border: 1px solid #ffffff1c;
    background: linear-gradient(#9198a3 0, #a8a9ad 121px, #8b8d90 143px, #6b6a69 163px, #595653 183px, #4a4642 203px, #3d3833 243px, #382f2a 283px, #332a22 343px);
    background-origin: border-box;
}

.scene-view {
    position: absolute;
    left: -1px;
    top: -1px;
    width: calc(100% + 2px);
    height: calc(100% + 2px);
}

.grid {
    fill: none;
    stroke: #fff;
    stroke-opacity: 0.08;
}

.grid .major {
    stroke-opacity: 0.2;
}

.grid .bright {
    stroke-opacity: 0.35;
}

.axis-names {
    font-size: 17px;
    text-anchor: middle;
    fill: #0d1f10;
}

.axis-back {
    fill: #7a3440;
}

.view-name {
    position: absolute;
    left: 12px;
    top: 12px;
    height: 41px;
    gap: 8px;
    padding: 0 10px 2px;
    background: #626367;
    border-radius: 6px;
    color: #dcdcdc;
}

/* output panel */
.output {
    display: flex;
    flex-direction: column;
    gap: 5px;
    flex: none;
    margin-top: 4px;
    padding: 8px 5px 5px;
    background: #292929;
    border-radius: 6px;
}

.log {
    height: 230px;
    padding: 11px 10px;
    background: #1f1f1f;
    border-radius: 6px;
    color: #808080;
    font-family: "DejaVu Sans Mono", "Liberation Mono", monospace;
    font-size: 16px;
    line-height: 20px;
}

.log .plain {
    color: #cfcfcf;
}

.output-row {
    display: flex;
    align-items: center;
    gap: 5px;
}

.counter {
    width: 78px;
    height: 41px;
    gap: 16px;
    padding: 0 10px 1px 0;
    background: #424242;
    border-radius: 6px;
    color: #dedede;
}

.bottom-tab {
    height: 41px;
    padding: 0 10px 1px;
    border-radius: 6px;
}

.bottom-tab.active {
    background: #424242;
    color: #f0f0f0;
}

.status {
    display: flex;
    align-items: center;
    gap: 5px;
    margin-left: auto;
}

.status .separator {
    height: 32px;
    margin: 0 2px;
}

.bell {
    margin-left: 12px;
    color: #4a4a4a;
}

.version {
    padding: 0 5px 1px 8px;
    color: #8a8a8a;
    font-feature-settings: "cv08", "tnum";
}

/* inspector */
.inspector {
    flex: none;
    width: 342px;
}

.inspector .dock-body {
    border-radius: 0 0 0 6px;
}

.tab-arrows {
    display: flex;
    align-items: center;
    gap: 2px;
    margin-left: auto;
    padding-right: 4px;
}

.tab-arrows .prev {
    color: #888;
}

.tab-arrows .tab-dots {
    margin-left: 10px;
    color: #5e5e5e;
}

.inspector-grid {
    display: grid;
    grid-template-columns: 1fr 35px;
    grid-auto-rows: max-content;
    align-items: center;
    gap: 5px;
    padding-right: 0;
}

.resource-bar {
    display: flex;
    align-items: center;
    gap: 5px;
}

.resource-bar .tool,
.resource-bar + .tool {
    height: 30px;
}

.resource-nav {
    display: flex;
    gap: 12px;
    margin-left: auto;
    padding-right: 4px;
}

.object-picker {
    height: 41px;
    background: #393939;
    border-radius: 6px;
}

/* desktop taskbar */
.taskbar {
    display: flex;
    flex: none;
    height: 12px;
    overflow: hidden;
    background: linear-gradient(90deg, #22282b 0, #20272a 38%, #2f2226 50%, #2f2226 60%, #25262a 75%, #30282d 100%);
}

.task-search {
    width: 360px;
    margin-left: 60px;
    background: #f2f2f2;
    border: 1px solid #b8b8b8;
}

.task-active {
    width: 61px;
    margin-left: 373px;
    background: #454a4e;
}

.clock {
    margin-left: auto;
    padding: 3px 85px 0 0;
    color: #fff;
    font-family: "Open Sans", "Liberation Sans", sans-serif;
    font-size: 14px;
    line-height: 20px;
}

/* floating windows */
.window {
    position: absolute;
    display: flex;
    flex-direction: column;
    overflow: hidden;
    background: #141414;
    box-shadow: 0 2px 16px rgba(0, 0, 0, 0.45);
}

.settings-window {
    left: 529px;
    top: 188px;
    width: 1502px;
    height: 914px;
    border: 1px solid #4a4a4a;
}

.event-window {
    left: 880px;
    top: 416px;
    width: 800px;
    height: 538px;
}

.window-title {
    display: flex;
    align-items: center;
    gap: 6px;
    flex: none;
    height: 37px;
    padding: 0 24px 0 10px;
    background: #fff;
    color: #111;
    font-family: "Open Sans", "Liberation Sans", sans-serif;
    font-size: 14px;
}

.event-window .window-title {
    padding-right: 15px;
}

.window-title.inactive {
    color: #999;
}

.window-buttons {
    display: flex;
    gap: 47px;
    margin-left: auto;
    color: #111;
}

.window-buttons svg {
    width: 12px;
    height: 12px;
}

.inactive .window-buttons {
    color: #888;
}

.window-buttons .faint {
    opacity: 0.3;
}

.window-body {
    display: flex;
    flex-direction: column;
    flex: 1;
    padding: 12px 12px 0;
}

.window .tabs {
    gap: 1px;
}

.panel {
    display: flex;
    flex-direction: column;
    gap: 5px;
    flex: 1;
    padding: 8px 7px 8px 8px;
    background: #292929;
    border-radius: 0 0 6px 6px;
}

.filter-row {
    display: grid;
    grid-template-columns: 4fr 3fr auto;
    gap: 5px;
}

.add-row {
    display: flex;
    align-items: center;
    gap: 5px;
}

.push {
    height: 41px;
    padding: 0 11px 1px;
    background: #424242;
    border-radius: 6px;
    color: #dcdcdc;
}

.push:disabled {
    background: #393939;
    color: #757575;
}

.push:disabled .icon {
    color: #757575;
}

.add-button {
    gap: 6px;
}

.add-row .separator {
    height: 32px;
}

.builtin {
    padding: 0 6px 1px 10px;
    white-space: nowrap;
    font-feature-settings: "cv08", "tnum";
}

.toggle {
    appearance: none;
    display: flex;
    align-items: center;
    width: 46px;
    height: 17px;
    margin-right: 11px;
    padding: 2px;
    background: #4c4c4c;
    border-radius: 9px;
}

.toggle::before {
    content: "";
    width: 13px;
    height: 13px;
    border-radius: 50%;
    background: #dedede;
}

.actions {
    margin: 4px 5px 0;
    border-collapse: collapse;
}

.actions th {
    height: 35px;
    padding: 0 4px 0 0;
    font-weight: 400;
}

.actions th span {
    display: block;
    height: 35px;
    line-height: 35px;
    background: #1b1b1b;
    border-radius: 6px;
}

.actions .deadzone {
    width: 112px;
}

.actions .ops {
    width: 86px;
    padding: 0;
}

.actions td {
    height: 30px;
}

.actions .name {
    padding: 0 0 2px 33px;
    background: #323232;
    border-radius: 5px;
}

.actions .value {
    padding-right: 4px;
}

.actions .value div {
    display: flex;
    align-items: center;
    height: 30px;
    padding: 0 14px 2px 13px;
    background: #323232;
}

.actions .value input {
    flex: 1;
    width: 40px;
    min-width: 0;
}

.actions .value .icon {
    color: #b0b0b0;
}

.actions .edit div {
    display: flex;
    justify-content: flex-end;
}

.actions .edit .tool {
    width: 30px;
    height: 30px;
    padding: 0 0 2px 3px;
}

.window-footer {
    display: flex;
    justify-content: center;
    padding: 10px 0 12px;
}

.window-footer .push {
    width: 131px;
    height: 42px;
}

.event-window .panel {
    width: 1476px;
}

.event-window .name-filter,
.event-window .field {
    flex: none;
}

.event-window .name-filter {
    width: 778px;
}

.event-window .actions {
    width: 1253px;
}
```
